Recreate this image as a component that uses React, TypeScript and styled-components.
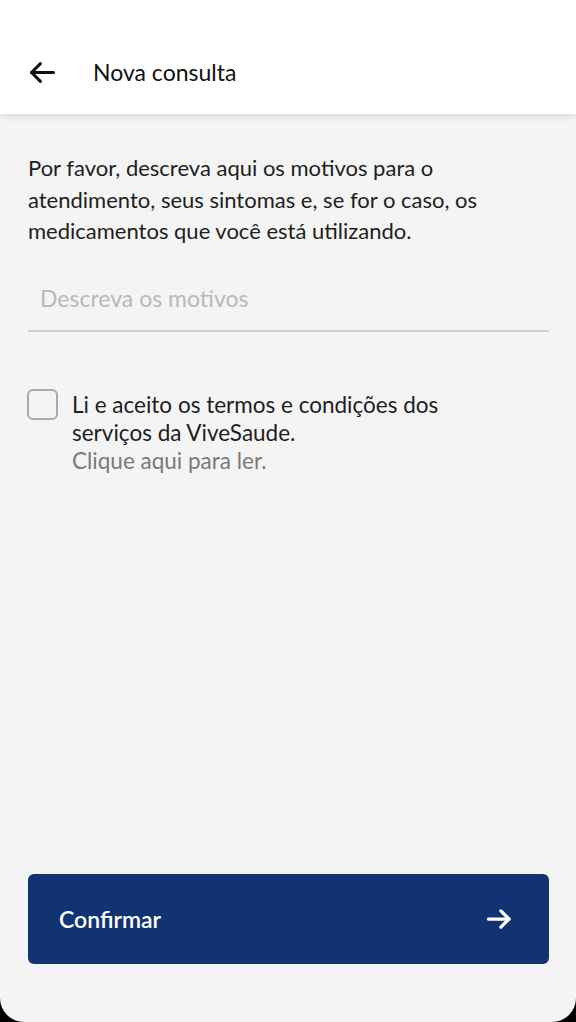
import styled, { createGlobalStyle } from "styled-components";

const GlobalStyle = createGlobalStyle`
  html, body {
    margin: 0;
    padding: 0;
    background: #000;
  }
  body {
    font-family: Lato, "Open Sans", sans-serif;
  }
`;

const Screen = styled.div`
  width: 576px;
  height: 1022px;
  background: #f3f4f3;
  border-radius: 0 0 24px 24px;
  display: flex;
  flex-direction: column;
  overflow: hidden;
`;

const Header = styled.header`
  height: 114px;
  background: #fff;
  box-shadow: 0 2px 8px rgba(0, 0, 0, 0.12);
  display: flex;
  align-items: center;
  padding: 30px 0 0 26px;
  box-sizing: border-box;
  gap: 34px;
  position: relative;
  z-index: 1;
`;

const BackButton = styled.button`
  border: 0;
  background: none;
  padding: 0;
  display: flex;
  width: 33px;
  height: 33px;
  cursor: pointer;
`;

const Title = styled.h1`
  margin: 0;
  font-size: 23px;
  font-weight: 400;
  color: #111;
`;

const Content = styled.main`
  flex: 1;
  padding: 38px 27px 58px 28px;
  display: flex;
  flex-direction: column;
`;

const Intro = styled.p`
  margin: 0;
  font-size: 22px;
  line-height: 31.5px;
  color: #1e1e1e;
`;

const Field = styled.div`
  margin-top: 37px;
  border-bottom: 2px solid #cfd0cf;
  padding: 0 12px 18px;
`;

const Input = styled.input`
  border: 0;
  background: transparent;
  outline: none;
  width: 100%;
  font-family: inherit;
  font-size: 23px;
  color: #222;
  padding: 0;
  &::placeholder {
    color: #b8b9b8;
  }
`;

const Terms = styled.label`
  margin-top: 59px;
  display: flex;
  gap: 14px;
  align-items: flex-start;
`;

const Box = styled.span`
  width: 27px;
  height: 27px;
  border: 2.5px solid #aaa;
  border-radius: 6px;
  flex-shrink: 0;
  margin-top: -2px;
  margin-left: -1px;
`;

const TermsText = styled.div`
  max-width: 420px;
  font-size: 22.5px;
  line-height: 28.5px;
  color: #1e1e1e;
`;

const ReadLink = styled.span`
  display: block;
  color: #7a7a7a;
  margin-top: -1px;
`;

const Spacer = styled.div`
  flex: 1;
`;

const ConfirmButton = styled.button`
  height: 90px;
  border: 0;
  border-radius: 6px;
  background: #123372;
  color: #fff;
  display: flex;
  align-items: center;
  justify-content: space-between;
  padding: 0 35px 0 31px;
  font-family: inherit;
  font-size: 23px;
  font-weight: 600;
  cursor: pointer;
`;

export default function App() {
  return (
    <>
      <GlobalStyle />
      <Screen>
        <Header>
          <BackButton aria-label="Voltar">
            <svg width="33" height="33" viewBox="0 0 24 24" fill="none" stroke="#111" strokeWidth="2.2" strokeLinecap="round" strokeLinejoin="round">
              <path d="M20 12H4" />
              <path d="M10.5 5.5 4 12l6.5 6.5" />
            </svg>
          </BackButton>
          <Title>Nova consulta</Title>
        </Header>
        <Content>
          <Intro>
            Por favor, descreva aqui os motivos para o atendimento, seus sintomas e, se for o caso, os
            medicamentos que você está utilizando.
          </Intro>
          <Field>
            <Input placeholder="Descreva os motivos" />
          </Field>
          <Terms>
            <Box />
            <TermsText>
              Li e aceito os termos e condições dos serviços da ViveSaude.
              <ReadLink>Clique aqui para ler.</ReadLink>
            </TermsText>
          </Terms>
          <Spacer />
          <ConfirmButton>
            Confirmar
            <svg width="30" height="30" viewBox="0 0 24 24" fill="none" stroke="#fff" strokeWidth="2.6" strokeLinecap="round" strokeLinejoin="round">
              <path d="M3.5 12h16.5" />
              <path d="M13.5 5.5 20 12l-6.5 6.5" />
            </svg>
          </ConfirmButton>
        </Content>
      </Screen>
    </>
  );
}
